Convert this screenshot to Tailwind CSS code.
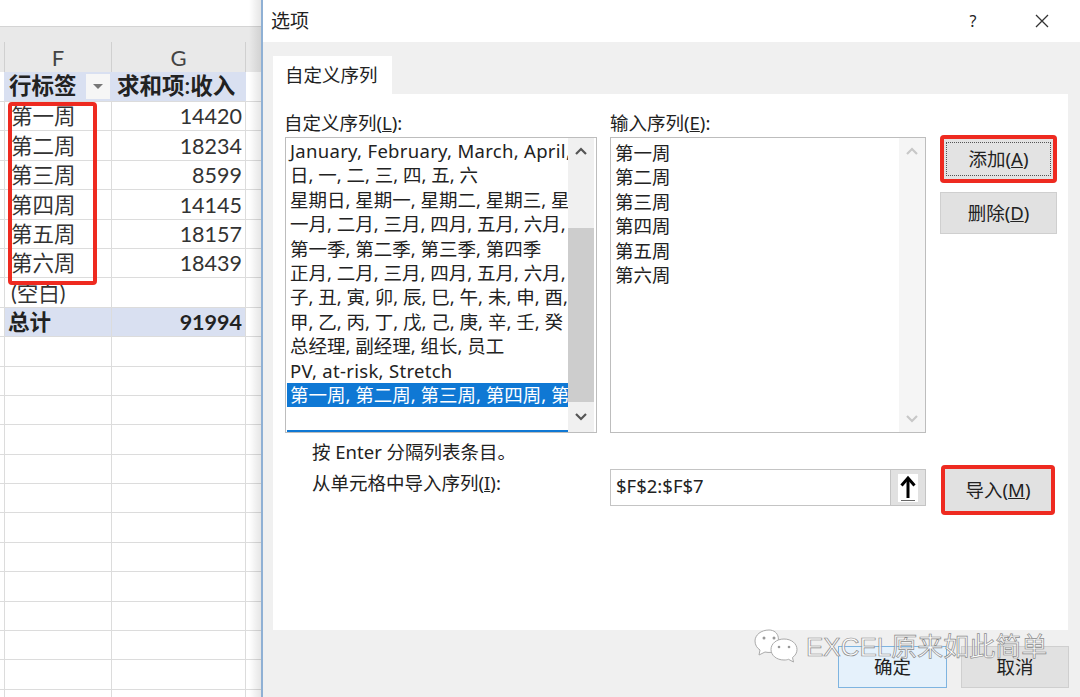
<!DOCTYPE html>
<html lang="zh-CN">
<head>
  <meta charset="UTF-8" />
  <title>选项</title>
  <script src="https://cdn.jsdelivr.net/npm/@tailwindcss/browser@4"></script>
</head>
<body class="h-[697px] w-[1080px] overflow-hidden flex bg-white text-[#222] font-['Noto_Sans','Noto_Sans_CJK_SC',sans-serif]">

  <!-- Sheet behind the dialog -->
  <div class="relative w-[261px] h-[697px] shrink-0 overflow-hidden font-['Lato','Noto_Sans_CJK_SC',sans-serif]">
    <div class="h-[27px] bg-white border-b border-[#d4d4d4]"></div>
    <div class="h-[45px] bg-[#e9e9e9] pt-[15px] flex text-[22px] text-[#444]">
      <div class="w-[4px]"></div>
      <div class="w-[107px] border-l border-[#d0d0d0] flex items-center justify-center">F</div>
      <div class="w-[135px] border-l border-r border-[#d0d0d0] flex items-center justify-center">G</div>
    </div>

    <div class="flex h-[30px] border-b border-[#dcdcdc] text-[22.5px] font-semibold leading-none">
      <div class="w-[4px]"></div>
      <div class="w-[107px] bg-[#d9e0f1] flex items-center pl-[5px] relative">行标签
        <div class="absolute right-[1px] top-[2px] w-[24px] h-[25px] bg-[#f6f6f6] flex items-center justify-center">
          <div class="w-0 h-0 border-x-[5px] border-x-transparent border-t-[5px] border-t-[#777]"></div>
        </div>
      </div>
      <div class="w-[135px] bg-[#d9e0f1] flex items-center pl-[6px]">求和项:收入</div>
    </div>

    <div id="rows" class="flex flex-col text-[21.5px] leading-none text-[#333]"></div>

    <!-- red marker round the week labels, window shadow on the right edge -->
    <div class="absolute left-[8px] top-[102px] w-[89px] h-[183px] border-[4px] border-[#ee2a20] rounded-[4px]"></div>
    <div class="absolute right-0 top-0 bottom-0 w-[12px] bg-linear-to-r from-transparent to-black/10"></div>
  </div>

  <!-- Dialog -->
  <div class="relative flex-1 flex flex-col border-l-[2px] border-[#8fb0d4]">
    <div class="h-[42px] bg-white flex items-center pl-[8px] text-[19px] shrink-0">
      <span class="flex-1">选项</span>
      <span class="w-[20px] text-center text-[16px] mr-[52px]">?</span>
      <svg class="w-[14px] h-[14px] mr-[31px]" viewBox="0 0 14 14" fill="none" stroke="#333" stroke-width="1.3"><path d="M1 1l12 12M13 1L1 13" /></svg>
    </div>

    <div class="flex-1 bg-[#f0f0f0] pl-[10px] pr-[12px] pt-[14px] flex flex-col">
      <div class="w-[119px] h-[38px] bg-white flex items-center pl-[12px] text-[18.5px]">自定义序列</div>

      <div class="h-[536px] bg-white pl-[12px] pt-[18px] text-[18.5px] relative">
        <div class="flex">
          <!-- left list -->
          <div class="w-[312px] mr-[13px]">
            <div class="h-[25px] leading-[22px] -ml-[1px]">自定义序列(<span class="underline">L</span>):</div>
            <div class="h-[296px] border border-[#bdbdbd] flex">
              <div class="w-[282px] pt-[1px] pl-[1px] leading-[24.4px] whitespace-nowrap overflow-hidden relative">
                <div class="px-[3px] tracking-[0.3px]">January, February, March, April, May</div>
                <div class="px-[3px]">日, 一, 二, 三, 四, 五, 六</div>
                <div class="px-[3px]">星期日, 星期一, 星期二, 星期三, 星期四</div>
                <div class="px-[3px]">一月, 二月, 三月, 四月, 五月, 六月, 七月</div>
                <div class="px-[3px]">第一季, 第二季, 第三季, 第四季</div>
                <div class="px-[3px]">正月, 二月, 三月, 四月, 五月, 六月, 七月</div>
                <div class="px-[3px]">子, 丑, 寅, 卯, 辰, 巳, 午, 未, 申, 酉, 戌</div>
                <div class="px-[3px]">甲, 乙, 丙, 丁, 戊, 己, 庚, 辛, 壬, 癸</div>
                <div class="px-[3px]">总经理, 副经理, 组长, 员工</div>
                <div class="px-[3px] tracking-[0.3px]">PV, at-risk, Stretch</div>
                <div class="px-[3px] bg-[#0f78d4] text-white">第一周, 第二周, 第三周, 第四周, 第五周</div>
                <div class="absolute left-[1px] right-0 bottom-0 h-[2px] bg-[#0f78d4]"></div>
              </div>
              <div class="w-[26px] bg-[#f0f0f0] flex flex-col">
                <div class="h-[26px] flex items-center justify-center">
                  <svg class="w-[12px] h-[8px]" viewBox="0 0 12 8" fill="none" stroke="#555" stroke-width="2.2"><path d="M1 7l5-5 5 5" /></svg>
                </div>
                <div class="h-[64px]"></div>
                <div class="h-[174px] bg-[#cdcdcd]"></div>
                <div class="flex-1 flex items-center justify-center">
                  <svg class="w-[12px] h-[8px]" viewBox="0 0 12 8" fill="none" stroke="#555" stroke-width="2.2"><path d="M1 1l5 5 5-5" /></svg>
                </div>
              </div>
            </div>
          </div>

          <!-- right list -->
          <div class="w-[316px] mr-[14px]">
            <div class="h-[25px] leading-[22px]">输入序列(<span class="underline">E</span>):</div>
            <div class="h-[296px] border border-[#bdbdbd] flex">
              <div class="flex-1 pt-[3px] pl-[4px] leading-[24.4px]">
                <div>第一周</div>
                <div>第二周</div>
                <div>第三周</div>
                <div>第四周</div>
                <div>第五周</div>
                <div>第六周</div>
              </div>
              <div class="w-[26px] bg-[#f5f5f5] flex flex-col justify-between py-[9px]">
                <svg class="w-[12px] h-[8px] mx-auto" viewBox="0 0 12 8" fill="none" stroke="#c8c8c8" stroke-width="2.2"><path d="M1 7l5-5 5 5" /></svg>
                <svg class="w-[12px] h-[8px] mx-auto" viewBox="0 0 12 8" fill="none" stroke="#c8c8c8" stroke-width="2.2"><path d="M1 1l5 5 5-5" /></svg>
              </div>
            </div>
          </div>

          <!-- buttons -->
          <div class="w-[117px] pt-[23px] flex flex-col">
            <div class="h-[48px] bg-[#e3e3e3] ring-[4px] ring-inset ring-[#ee2a20] rounded-[4px] flex items-center justify-center">
              <div class="w-[105px] h-[34px] border border-dotted border-[#555] flex items-center justify-center">添加(<span class="underline">A</span>)</div>
            </div>
            <div class="mt-[9px] h-[42px] bg-[#e1e1e1] border border-[#cfcfcf] flex items-center justify-center">删除(<span class="underline">D</span>)</div>
          </div>
        </div>

        <div class="flex mt-[4px]">
          <div class="w-[325px] pl-[27px]">
            <div class="h-[30px] leading-[30px]">按 Enter 分隔列表条目。</div>
            <div class="h-[30px] leading-[30px] mt-[1px]">从单元格中导入序列(<span class="underline">I</span>):</div>
          </div>
          <div class="w-[316px] h-[37px] mt-[32px] border border-[#c4c4c4] flex mr-[15px]">
            <div class="flex-1 pl-[5px] leading-[31px]">$F$2:$F$7</div>
            <div class="w-[35px] bg-[#e1e1e1] border-l border-[#c4c4c4] flex items-center justify-center">
              <svg class="w-[20px] h-[28px] bg-white" viewBox="0 0 20 28" fill="none" stroke="#000"><path stroke-width="3" d="M10 24V5" /><path stroke-width="3" d="M3.5 11.5L10 4l6.500 7.500" /><path stroke="#666" d="M3 26.500h14" /></svg>
            </div>
          </div>
          <div class="w-[114px] h-[50px] mt-[28px] bg-[#e1e1e1] ring-[4px] ring-inset ring-[#ee2a20] rounded-[4px] flex items-center justify-center">导入(<span class="underline">M</span>)</div>
        </div>
      </div>

      <div class="flex justify-end gap-[14px] pt-[16px] text-[18.5px] -mr-[1px]">
        <div class="w-[109px] h-[42px] bg-[#e5f1fb] border border-[#7eb4e0] flex items-center justify-center">确定</div>
        <div class="w-[108px] h-[42px] bg-[#e1e1e1] border border-[#cfcfcf] flex items-center justify-center">取消</div>
      </div>
    </div>

    <!-- watermark -->
    <div class="absolute left-[490px] top-[628px] flex items-center gap-[7px] text-[26px] leading-none text-white/80 [-webkit-text-stroke:0.7px_#8a8a8a] font-['Liberation_Sans','Noto_Sans_CJK_SC',sans-serif]">
      <svg class="w-[46px] h-[38px]" viewBox="0 0 46 38">
        <path d="M16 2C8 2 2 7 2 13c0 4 2 7 5 9l-1 5 6-3c2 .5 4 .5 6 .4C30 14 26 2 16 2z" fill="#fff" stroke="#aaa" />
        <path d="M31 11c-7.500 0-13 4.700-13 10.500S23.500 32 31 32c2 0 3-.2 4.500-.7l5 2.700-1-4.500c3-2 4.500-5 4.500-8 0-5.800-5.500-10.500-13-10.500z" fill="#fff" stroke="#aaa" />
        <circle cx="11" cy="10" r="1.500" fill="#999" /><circle cx="21" cy="10" r="1.500" fill="#999" />
        <circle cx="26" cy="19" r="1.300" fill="#999" /><circle cx="36" cy="19" r="1.300" fill="#999" />
      </svg>
      <span>EXCEL原来如此简单</span>
    </div>
  </div>

  <script>
    // body rows of the pivot table, then the empty grid down to the window edge
    const data = [
      ['第一周', '14420'], ['第二周', '18234'], ['第三周', '8599'],
      ['第四周', '14145'], ['第五周', '18157'], ['第六周', '18439'], ['(空白)', '']
    ];
    const rows = document.getElementById('rows');

    function addRow(a, b, cellClass) {
      const r = document.createElement('div');
      r.className = 'flex h-[29.4px] shrink-0 border-b border-[#dcdcdc]';
      r.innerHTML = `
        <div class="w-[4px]"></div>
        <div class="w-[107px] flex items-center pl-[6px] pt-[2px] border-l border-[#dcdcdc] ${cellClass}">${a}</div>
        <div class="w-[135px] flex items-center justify-end pr-[3px] pt-[2px] border-l border-r border-[#dcdcdc] ${cellClass}">${b}</div>`;
      rows.appendChild(r);
    }

    data.forEach(d => addRow(d[0], d[1], ''));
    addRow('<span class="-ml-[3px]">总计</span>', '91994', 'bg-[#d9e0f1] font-bold text-[#222]');
    for (let i = 0; i < 13; i++) addRow('', '', '');
  </script>
</body>
</html>
